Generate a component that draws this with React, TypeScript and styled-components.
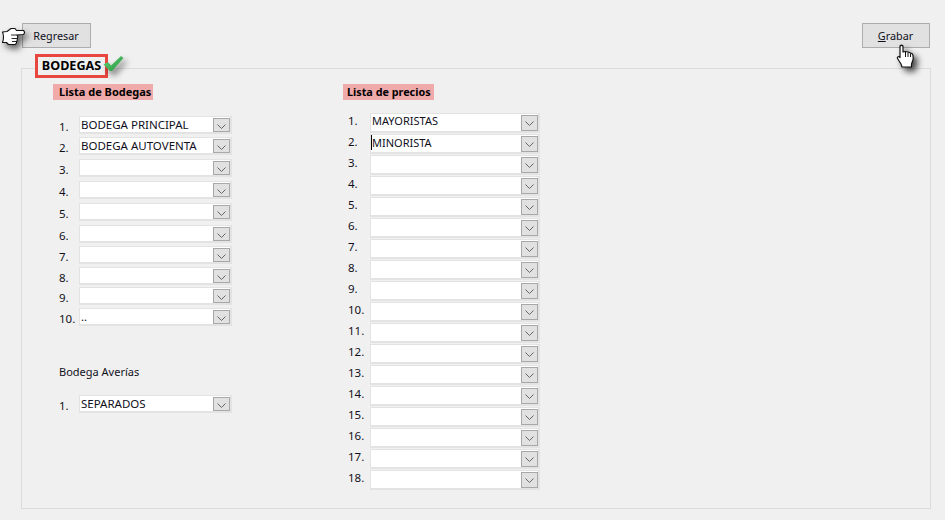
import React from "react";
import styled, { createGlobalStyle } from "styled-components";

const GlobalStyle = createGlobalStyle`
  html, body {
    margin: 0;
    padding: 0;
    background: #f0f0f0;
  }
  body {
    font-family: "Noto Sans", "Open Sans", sans-serif;
    font-size: 11px;
    color: #10101c;
  }
`;

const Page = styled.div`
  width: 945px;
  height: 520px;
  overflow: hidden;
  background: #f0f0f0;
`;

const TopBar = styled.div`
  display: flex;
  justify-content: space-between;
  padding: 23px 15px 0 22px;
`;

const ActionButton = styled.button<{ $width: number }>`
  position: relative;
  width: ${({ $width }) => $width}px;
  height: 25px;
  padding: 0 1px 0 0;
  background: #e1e1e1;
  border: 1px solid #adadad;
  color: #10101c;
  font-family: inherit;
  font-size: 10.8px;
  line-height: 23px;
`;

const BackHand = styled.svg`
  position: absolute;
  left: -22px;
  top: 3px;
  width: 25px;
  height: 20px;
  filter: drop-shadow(3px 4px 3px rgba(0, 0, 0, 0.6));
`;

const PointerHand = styled.svg`
  position: absolute;
  left: 33px;
  top: 20px;
  width: 20px;
  height: 25px;
  filter: drop-shadow(4px 4px 3px rgba(0, 0, 0, 0.7));
`;

const Panel = styled.div`
  width: 908px;
  height: 439px;
  margin: 20px 0 0 21px;
  border: 1px solid #dcdcdc;
`;

const TitleRow = styled.div`
  display: flex;
  align-items: flex-start;
  margin: -15px 0 0 13px;
`;

const Title = styled.div`
  box-sizing: border-box;
  width: 73px;
  height: 24px;
  border: 3px solid #e8473f;
  background: #f0f0f0;
  color: #000;
  font-size: 12.6px;
  font-weight: 700;
  line-height: 18px;
  text-align: center;
  white-space: nowrap;
`;

const CheckMark = styled.svg`
  width: 22px;
  height: 20px;
  margin: 1px 0 0 -5px;
  filter: drop-shadow(3px 4px 3px rgba(0, 0, 0, 0.55));
`;

const Columns = styled.div`
  display: flex;
  padding: 6px 0 0 31px;
`;

const LeftColumn = styled.div`
  width: 290px;
  font-size: 11.5px;
`;

const RightColumn = styled.div`
  width: 200px;
  font-size: 11px;
`;

const Heading = styled.div<{ $width: number; $pad: number; $size: number }>`
  box-sizing: border-box;
  width: ${({ $width }) => $width}px;
  height: 16px;
  padding-left: ${({ $pad }) => $pad}px;
  background: #f0aaaa;
  color: #000;
  font-size: ${({ $size }) => $size}px;
  font-weight: 700;
  line-height: 15px;
  white-space: nowrap;
`;

const Row = styled.div<{ $top?: number; $inset: number }>`
  display: flex;
  margin-top: ${({ $top }) => $top ?? 0}px;
  padding-left: ${({ $inset }) => $inset}px;
`;

const RowNumber = styled.div<{ $width: number; $lift: boolean }>`
  width: ${({ $width }) => $width}px;
  height: 18px;
  font-size: 11.5px;
  line-height: ${({ $lift }) => ($lift ? "16px" : "21px")};
`;

const Combo = styled.div<{ $width: number; $height: number; $topText: boolean }>`
  box-sizing: border-box;
  display: flex;
  justify-content: space-between;
  align-items: ${({ $topText }) => ($topText ? "center" : "flex-end")};
  width: ${({ $width }) => $width}px;
  height: ${({ $height }) => $height}px;
  padding-left: 1px;
  background: #fff;
  border: 2px solid #e3e3e3;
  border-top-width: 1px;
  border-left-width: 1px;
`;

const ComboValue = styled.div<{ $topText: boolean }>`
  align-self: flex-start;
  color: #10101c;
  line-height: ${({ $topText }) => ($topText ? "14px" : "16px")};
  white-space: nowrap;
`;

const Caret = styled.span`
  display: inline-block;
  width: 1px;
  height: 15px;
  margin: 0 0 -3px -1px;
  background: #000;
`;

const ComboArrow = styled.div<{ $height: number }>`
  box-sizing: border-box;
  display: flex;
  align-items: center;
  justify-content: center;
  flex: none;
  width: 17px;
  height: ${({ $height }) => $height}px;
  background: #e1e1e1;
  border: 1px solid #a8a8a8;
`;

const Chevron = styled.svg`
  width: 9px;
  height: 6px;
  margin-top: 3px;
`;

const RightList = styled.div`
  display: flex;
  flex-direction: column;
  gap: 1px;
  margin-top: 13px;
`;

const SubLabel = styled.div`
  margin: 37px 0 14px 6px;
  font-size: 11px;
  line-height: 18px;
`;

const bodegaRows = [
  { top: 16, value: "BODEGA PRINCIPAL" },
  { top: 3, value: "BODEGA AUTOVENTA" },
  { top: 4, value: "" },
  { top: 4, value: "" },
  { top: 4, value: "" },
  { top: 4, value: "" },
  { top: 3, value: "" },
  { top: 3, value: "" },
  { top: 2, value: "" },
  { top: 3, value: ".." },
];

const precios = ["MAYORISTAS", "MINORISTA", ...Array(16).fill("")];

interface FieldProps {
  width: number;
  height: number;
  arrow: number;
  value: string;
  topText?: boolean;
  caret?: boolean;
}

const Field = ({ width, height, arrow, value, topText = false, caret = false }: FieldProps): JSX.Element => (
  <Combo $width={width} $height={height} $topText={topText}>
    <ComboValue $topText={topText}>
      {caret && <Caret />}
      {value}
    </ComboValue>
    <ComboArrow $height={arrow}>
      <Chevron viewBox="0 0 9 6">
        <path d="M0.5 0.5 L4.5 4.5 L8.5 0.5" fill="none" stroke="#666" strokeWidth="1" />
      </Chevron>
    </ComboArrow>
  </Combo>
);

export default function App(): JSX.Element {
  return (
    <Page>
      <GlobalStyle />
      <TopBar>
        <ActionButton $width={69}>
          <BackHand viewBox="0 0 25 20">
            <path
              d="M1.5 5 L6 4.5 L10 1.5 L14 1.5 L15.5 3.5 L22.5 3.5 Q24.5 5.5 22.5 7.5 L16 8 Q17.5 9.5 16 11.5 Q17 13 15.5 14.5 Q16 16.5 14 17.5 L7.5 17.5 L5.5 15.5 L1.5 15.5 Q3.5 10 1.5 5 Z"
              fill="#fff"
              stroke="#111"
              strokeWidth="1.1"
              strokeLinejoin="round"
            />
            <path d="M10 8 L16 8 M10.5 11.5 L16 11.5 M11 14.5 L15.5 14.5" stroke="#111" strokeWidth="0.9" fill="none" />
          </BackHand>
          Regresar
        </ActionButton>
        <ActionButton $width={68}>
          <u>G</u>rabar
          <PointerHand viewBox="0 0 20 25">
            <path
              d="M4 2 Q5.5 0.5 7 2 L7 8 L9.5 7.5 L12 8 L14.5 9 L16.5 10 Q17.5 12 17 16 L15.5 20 L15.5 23 L6 23 L5 20 L1.5 14.5 Q1 12.5 3 12.5 L4 13.5 Z"
              fill="#fff"
              stroke="#111"
              strokeWidth="1.2"
              strokeLinejoin="round"
            />
            <path d="M9.5 8 L9.5 13 M12 8.5 L12 13 M14.5 9.5 L14.5 13" stroke="#111" strokeWidth="1" fill="none" />
          </PointerHand>
        </ActionButton>
      </TopBar>
      <Panel>
        <TitleRow>
          <Title>BODEGAS</Title>
          <CheckMark viewBox="0 0 22 20">
            <defs>
              <linearGradient id="checkGreen" x1="0" y1="0" x2="1" y2="1">
                <stop offset="0" stopColor="#6fd37c" />
                <stop offset="1" stopColor="#1c9437" />
              </linearGradient>
            </defs>
            <path d="M0.5 9.5 L5 7 L8 10.5 L18 1 L20.5 3 L9 16 L7 16 Z" fill="url(#checkGreen)" />
          </CheckMark>
        </TitleRow>
        <Columns>
          <LeftColumn>
            <Heading $width={100} $pad={6} $size={11}>Lista de Bodegas</Heading>
            {bodegaRows.map((row, i) => (
              <Row key={i} $top={row.top} $inset={6}>
                <RowNumber $width={20} $lift={false}>{i + 1}.</RowNumber>
                <Field width={153} height={18} arrow={14} value={row.value} />
              </Row>
            ))}
            <SubLabel>Bodega Averías</SubLabel>
            <Row $inset={6}>
              <RowNumber $width={20} $lift={false}>1.</RowNumber>
              <Field width={153} height={18} arrow={14} value="SEPARADOS" />
            </Row>
          </LeftColumn>
          <RightColumn>
            <Heading $width={91} $pad={4} $size={10.8}>Lista de precios</Heading>
            <RightList>
              {precios.map((value, i) => (
                <Row key={i} $inset={5}>
                  <RowNumber $width={22} $lift>{i + 1}.</RowNumber>
                  <Field width={170} height={20} arrow={16} value={value} topText caret={i === 1} />
                </Row>
              ))}
            </RightList>
          </RightColumn>
        </Columns>
      </Panel>
    </Page>
  );
}
